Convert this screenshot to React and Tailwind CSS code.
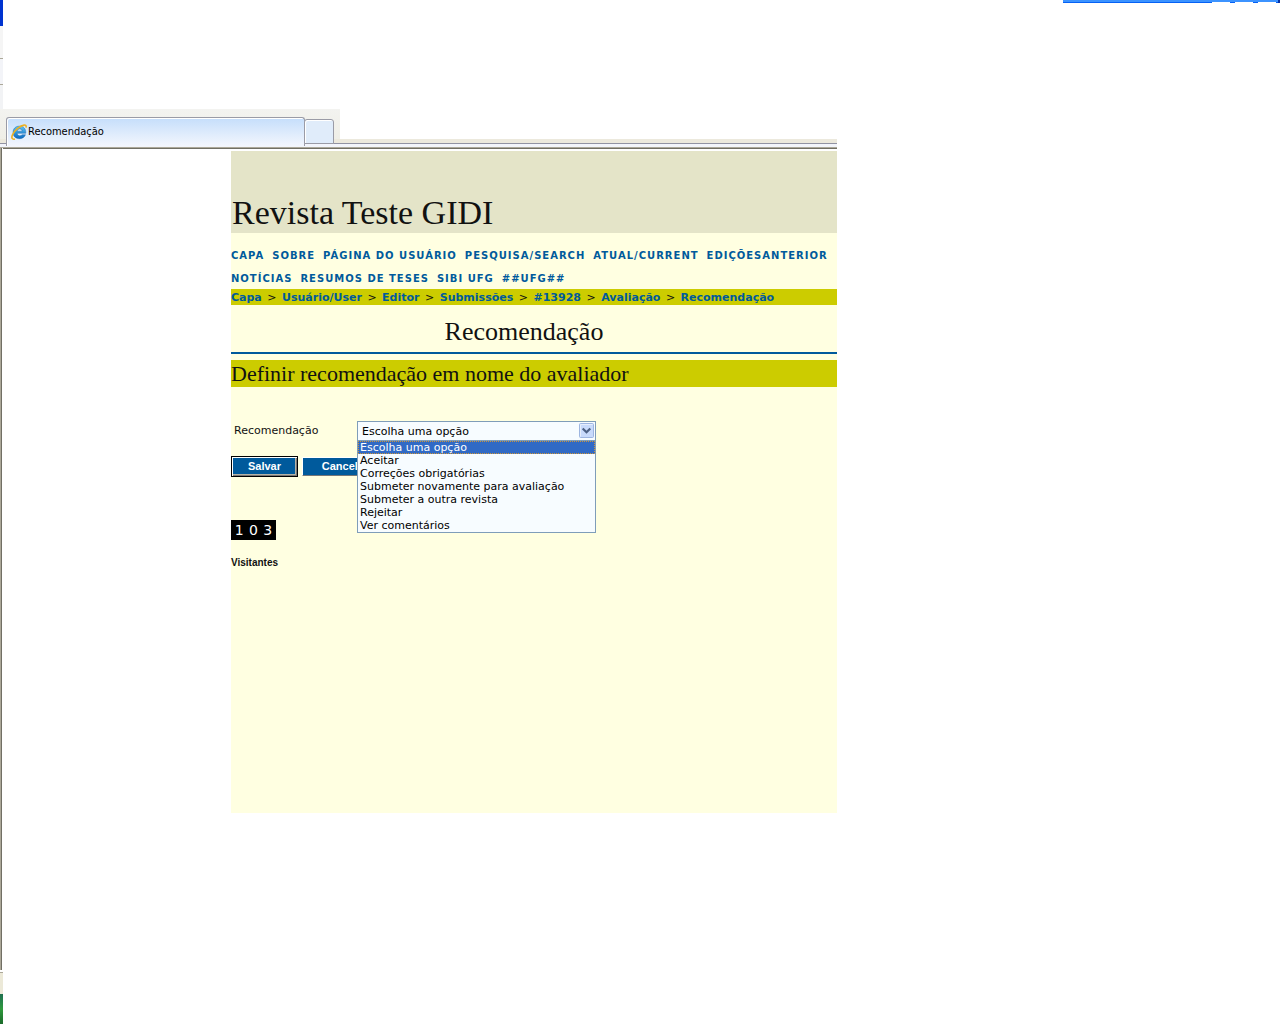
import React from "react";

const navRows = [
  ["Capa", "Sobre", "Página do usuário", "Pesquisa/Search", "Atual/Current", "EdiçõesAnterior"],
  ["Notícias", "Resumos de teses", "SIBI UFG", "##UFG##"],
];
const crumbs = ["Capa", "Usuário/User", "Editor", "Submissões", "#13928", "Avaliação", "Recomendação"];
const options = [
  "Escolha uma opção",
  "Aceitar",
  "Correções obrigatórias",
  "Submeter novamente para avaliação",
  "Submeter a outra revista",
  "Rejeitar",
  "Ver comentários",
];

function BrowserIcon() {
  return (
    <svg className="h-4 w-4 shrink-0" viewBox="0 0 16 16" aria-hidden="true">
      <defs>
        <linearGradient id="globe" x1="0" y1="0" x2="0" y2="1">
          <stop offset="0" stopColor="#5cc4f5" />
          <stop offset="1" stopColor="#0a68c0" />
        </linearGradient>
      </defs>
      <path
        d="M14.800 9.300H6.200c.1 1.600 1.100 2.500 2.600 2.500 1 0 1.800-.4 2.300-1.100h3.400c-1 2.500-3.100 4-6 4-3.900 0-6.500-2.500-6.500-6.200 0-3.800 2.600-6.400 6.500-6.400 4.100 0 6.600 2.800 6.300 7.200zM6.200 7.200h4.900c-.2-1.500-1.100-2.300-2.400-2.300S6.500 5.700 6.200 7.200z"
        fill="url(#globe)"
        stroke="#1260a4"
        strokeWidth=".4"
      />
      <path
        d="M15 3.600c.5-1.800-.3-2.700-1.900-2.500C9.400 1.500 3.400 6.300 1.400 11c-1.200 3-.2 4.900 2.600 3.900"
        fill="none"
        stroke="#edb021"
        strokeWidth="1.600"
      />
    </svg>
  );
}

function TabBar() {
  return (
    <div className="grid">
      <div className="col-start-1 row-start-1 h-[39px] w-[340px] self-start bg-gradient-to-b from-[#f3f3f0] to-[#eeede4]" />
      <div className="col-start-1 row-start-1 h-[9px] w-full max-w-[837px] self-end border-b border-[#aca899] bg-[#f3f5fb]">
        <div className="h-1 bg-[#ece9dd]" />
        <div className="h-px bg-[#9193a3]" />
      </div>
      <div className="z-10 col-start-1 row-start-1 flex items-end self-start pt-2 pl-1.5" role="tablist">
        <button
          role="tab"
          aria-selected="true"
          className="flex h-[29px] w-[299px] items-center gap-px rounded-t-[3px] border border-b-0 border-[#9a9ba6] bg-gradient-to-b from-[#c5defb] to-[#f3f6fd] pb-px pl-1 text-left font-['DejaVu_Sans_Condensed','DejaVu_Sans',sans-serif] text-[11px] leading-4 text-black shadow-[inset_1px_1px_0_#fff]"
        >
          <BrowserIcon />
          Recomendação
        </button>
        <button
          role="tab"
          aria-label="Nova guia"
          aria-selected="false"
          className="mb-0.5 -ml-px h-[25px] w-[30px] rounded-t-[3px] border border-[#9a9ba6] bg-[#e0ecfa] shadow-[inset_1px_1px_0_#fff]"
        />
      </div>
    </div>
  );
}

function RecommendationSelect() {
  return (
    <div className="relative h-5 w-[239px]">
      <select
        id="recommendation"
        className="block h-5 w-full appearance-none border border-[#7f9db9] bg-[#f7fcff] px-1 pt-px text-[11px] leading-4 text-black"
        defaultValue={options[0]}
      >
        {options.map((o) => (
          <option key={o}>{o}</option>
        ))}
      </select>
      <svg className="pointer-events-none absolute top-0.5 right-0.5" width="15" height="15" viewBox="0 0 15 15" aria-hidden="true">
        <rect x=".5" y=".5" width="14" height="14" rx="1" fill="#c8dafb" stroke="#9db5e0" />
        <path d="M1.500 13.500V1.500H13.500" fill="none" stroke="#e6eefd" />
        <path d="M3.700 5.500l3.800 3.800 3.800-3.800" fill="none" stroke="#4d6185" strokeWidth="2.200" />
      </svg>
      <ul
        role="listbox"
        aria-label="Recomendação"
        className="absolute top-[19px] left-0 z-10 w-full border border-[#7f9db9] bg-[#f7fcff] leading-[13px] text-black"
      >
        {options.map((o, i) => (
          <li
            key={o}
            role="option"
            aria-selected={i === 0}
            className={
              i === 0
                ? "bg-[#316ac5] px-0.5 text-white outline outline-dotted -outline-offset-1 outline-[#ce953a]"
                : "px-0.5"
            }
          >
            {o}
          </li>
        ))}
      </ul>
    </div>
  );
}

export default function App() {
  return (
    <div className="flex min-h-screen flex-col bg-white">
      <div className="flex h-[109px] justify-between">
        <div className="flex w-[3px] flex-col">
          <div className="h-[26px] bg-[#0033d0]" />
          <div className="h-[33px] border-b border-[#aca899] bg-[#f5f5f5]" />
          <div className="h-[26px] border-b border-[#aca899] bg-[#f3f4f8]" />
          <div className="grow bg-[#f2f3f5]" />
        </div>
        <div className="flex h-[3px] w-[217px] border-b border-[#0561f5] bg-[#3c93ff]">
          <div className="mt-0.5 ml-[149px] h-px w-[18px] bg-white" />
          <div className="mt-0.5 ml-[5px] h-px w-[18px] bg-white" />
          <div className="mt-0.5 ml-[5px] h-px w-[18px] bg-white" />
          <div className="ml-auto h-[3px] w-0.5 bg-[#0831a0]" />
        </div>
      </div>

      <TabBar />

      <div className="flex min-h-[822px]">
        <div className="w-[3px] shrink-0 border-r border-l border-r-white border-l-[#aca899] bg-[#716f64]" />
        <div className="w-full max-w-[834px]">
          <div className="h-px bg-[#716f64]" />
          <main className="mt-0.5 ml-[228px] min-h-[662px] bg-[#ffffe1] font-['DejaVu_Sans',sans-serif] text-[11px] text-[#111]">
            <header className="flex h-[82px] items-end bg-[#e4e4c8] pl-px">
              <h1 className="font-['Liberation_Serif',serif] text-[34px] leading-10">Revista Teste GIDI</h1>
            </header>
            <nav className="pt-[11px] text-[10px] leading-[23px] font-bold tracking-[1px] whitespace-nowrap text-[#005a9c] uppercase">
              {navRows.map((row) => (
                <ul key={row[0]} className="flex gap-2">
                  {row.map((item) => (
                    <li key={item}>
                      <a href="#">{item}</a>
                    </li>
                  ))}
                </ul>
              ))}
            </nav>
            <div className="-mt-px h-4 bg-[#cc0] leading-[17px] whitespace-nowrap">
              {crumbs.map((c, i) => (
                <React.Fragment key={c}>
                  {i > 0 && <span className="mx-0.5"> &gt; </span>}
                  <a href="#" className="font-bold text-[#005a9c]">
                    {c}
                  </a>
                </React.Fragment>
              ))}
            </div>
            <h2 className="border-b-2 border-[#005a9c] pt-3 pr-5 pb-[5px] text-center font-['Liberation_Serif',serif] text-[26px] leading-[30px]">
              Recomendação
            </h2>
            <h3 className="mt-1.5 bg-[#cc0] font-['Liberation_Serif',serif] text-[22px] leading-[27px]">
              Definir recomendação em nome do avaliador
            </h3>
            <form className="pt-[34px]">
              <div className="flex">
                <label htmlFor="recommendation" className="w-[126px] shrink-0 pl-[3px] leading-5">
                  Recomendação
                </label>
                <RecommendationSelect />
              </div>
              <div className="flex items-center gap-1 pt-[15px] font-['Liberation_Sans',sans-serif] text-[11px] font-bold text-white">
                <button type="button" className="h-[21px] w-[67px] border border-black bg-[#005a9c] pb-0.5 leading-4 shadow-[inset_1px_1px_0_#fff,inset_-1px_-1px_0_#777,inset_-2px_-2px_0_#b5b2a5]">
                  Salvar
                </button>
                <button type="button" className="h-[19px] w-[86px] border border-t-white border-r-[#777] border-b-[#777] border-l-white bg-[#005a9c] pb-0.5 leading-4">
                  Cancelar
                </button>
              </div>
            </form>
            <div className="mt-[43px] flex h-5 w-[45px] justify-around bg-black px-px text-sm leading-5 text-white">
              <span>1</span>
              <span>0</span>
              <span>3</span>
            </div>
            <p className="pt-[15px] font-['Liberation_Sans',sans-serif] text-[10px] leading-4 font-bold">Visitantes</p>
          </main>
        </div>
      </div>

      <div className="flex w-[3px] grow flex-col">
        <div className="h-[3px] border-b border-[#aca899] bg-white" />
        <div className="h-[21px] bg-[#ece9d8]" />
        <div className="grow bg-gradient-to-b from-[#1f6f4f] via-[#2f9a3c] to-[#1a6a2a]" />
      </div>
    </div>
  );
}
